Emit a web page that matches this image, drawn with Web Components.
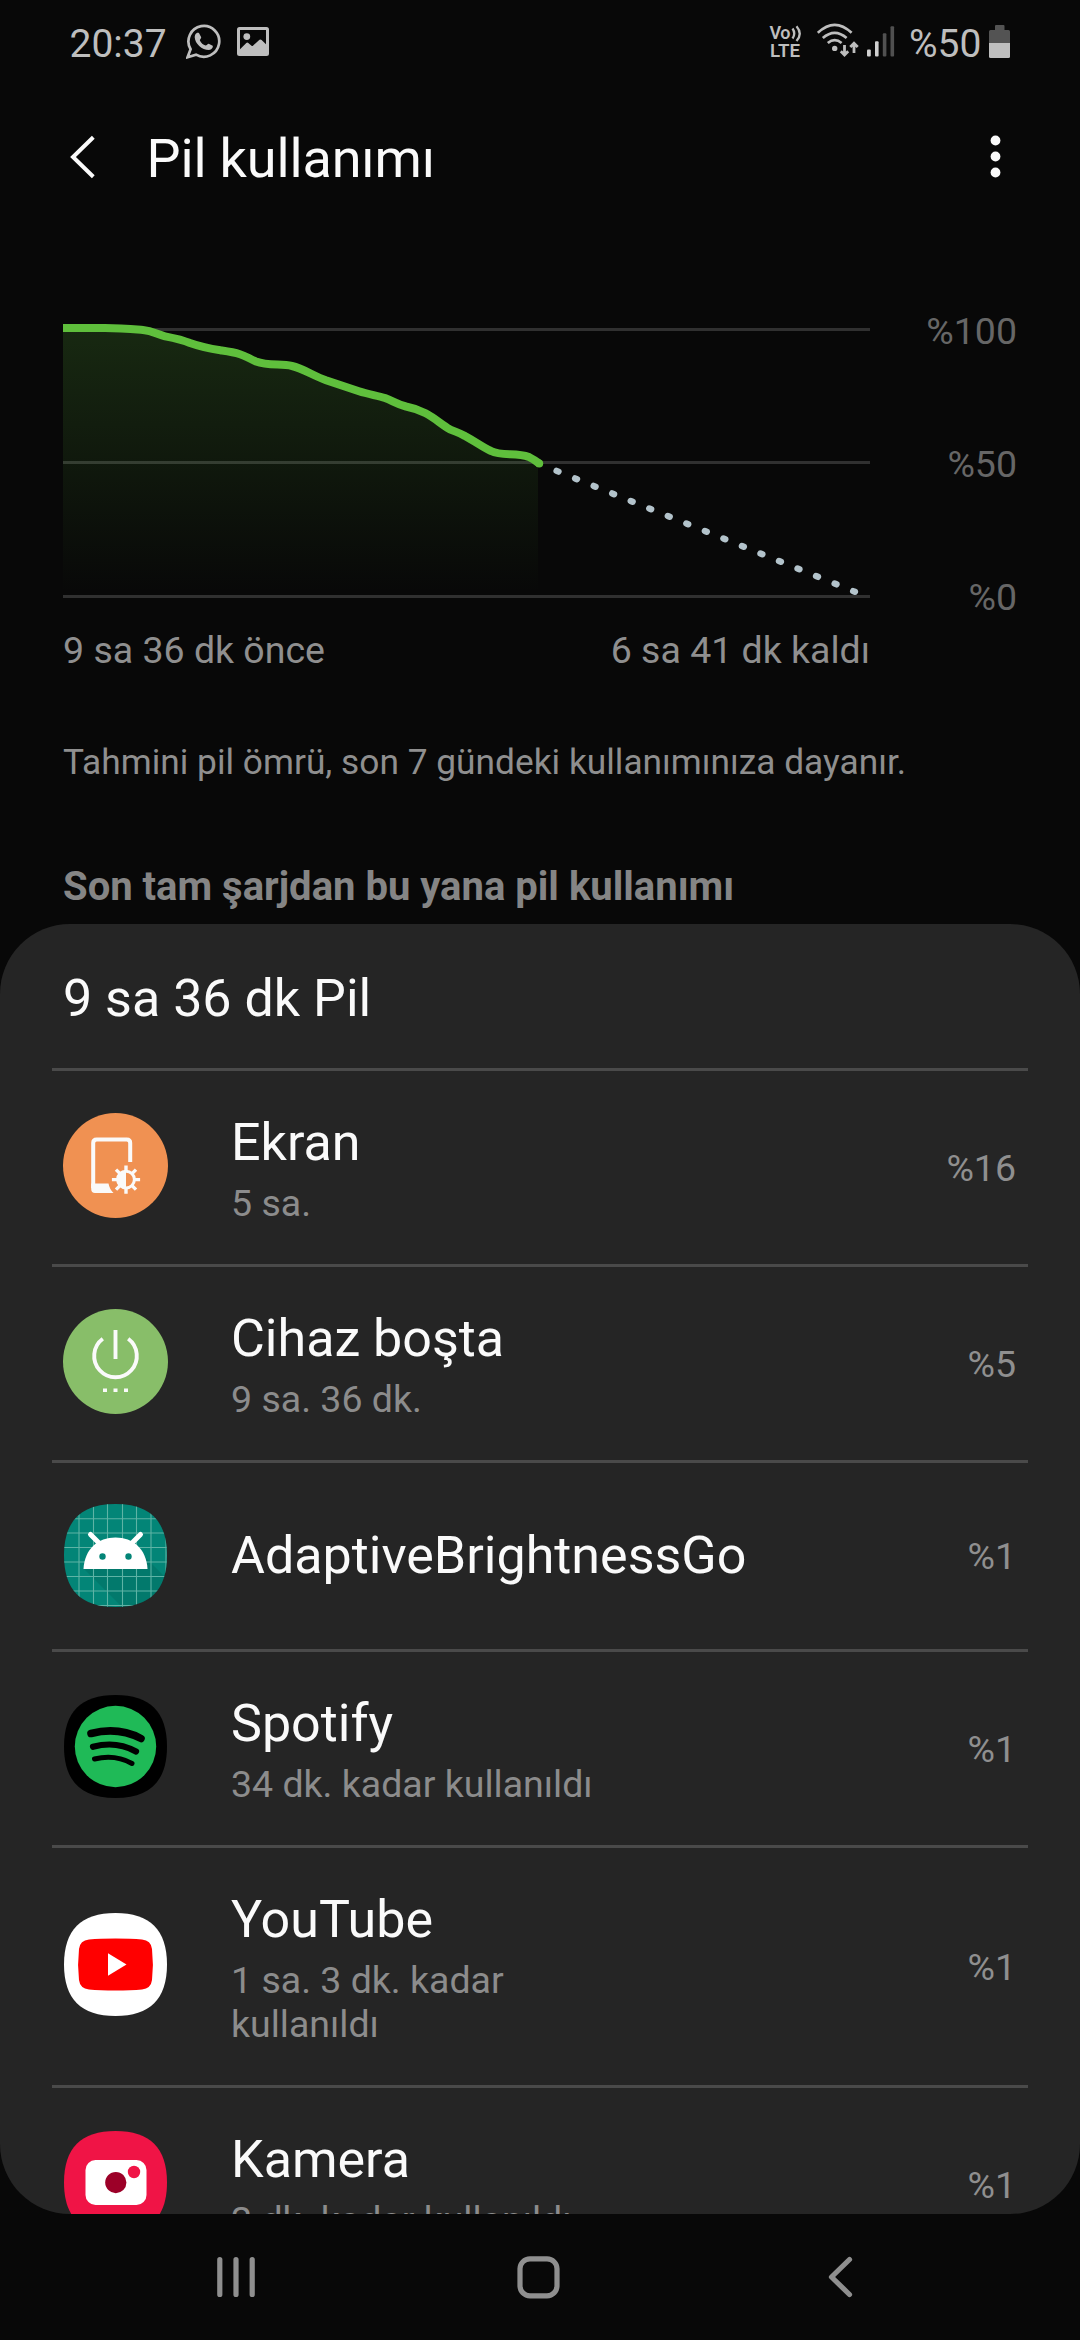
<!DOCTYPE html>
<html lang="tr">
<head>
<meta charset="utf-8">
<title>Pil kullanımı</title>
<style>
html,body{margin:0;padding:0;background:#080808}
body{font-family:Roboto,"Noto Sans",sans-serif;width:1080px;height:2340px;overflow:hidden}
</style>
</head>
<body>
<battery-screen></battery-screen>
<script>
const define = (name, html) => {
  const t = document.createElement('template');
  t.innerHTML = html;
  customElements.define(name, class extends HTMLElement {
    constructor() {
      super();
      this.attachShadow({ mode: 'open' }).append(t.content.cloneNode(true));
    }
  });
};

define('status-bar', `
<style>
:host{display:flex;height:84px;align-items:flex-start;box-sizing:border-box;padding:0 70px 0 69.5px;color:#bebebe;font-size:39px;line-height:46px;white-space:nowrap}
.t{margin-top:21px;width:116.5px}
svg{display:block;flex:none}
.sp{flex:1}
.wa{margin:24px 16px 0 0}.im{margin-top:27px}
.vl{margin-top:18px}
.wifi{margin:23px 0 0 14px}
.sig{margin:26px 0 0 8px}
.pct{width:76px;margin-top:21px;margin-left:14px}
.bat{margin:25px 0 0 4px}
</style>
<span class="t">20:37</span>
<svg class="wa" width="35" height="35" viewBox="0 0 35 35"><path d="M4.6 25.2A15.4 15.4 0 1 1 10 30.6L1.6 33.2Z" fill="none" stroke="#bebebe" stroke-width="2.7"/><path d="M9.3 10.6C10.2 8.9 12 8.4 13.1 9.2L15.2 13.2C15.4 14.4 13.6 15.4 13.9 16.4C15.2 19 17 20.6 19.6 21.6C20.7 21.6 21.5 19.8 22.7 19.8L26.7 21.8C27.4 23.4 25.6 25.7 23 26C15.8 26 9 19.5 8.7 13.2C8.7 12.2 8.9 11.3 9.3 10.6Z" fill="#bebebe"/></svg>
<svg class="im" width="32" height="30" viewBox="0 0 32 30"><path fill-rule="evenodd" fill="#bebebe" d="M2.5 0H29.5Q32 0 32 2.5V26.5Q32 29 29.5 29H2.5Q0 29 0 26.5V2.5Q0 0 2.5 0ZM3 3V22.3L9.3 16Q10.3 15.2 11.3 16L14.5 18.8Q15.3 19.2 16.2 18.4L22.5 12.7Q23.6 12 24.6 12.9L29 17.3V3Z"/><circle cx="9.8" cy="9.6" r="3.4" fill="#bebebe"/></svg>
<span class="sp"></span>
<svg class="vl" width="34" height="44" viewBox="0 -6 34 44"><g fill="#bebebe" font-family="Roboto" font-weight="600" font-size="18"><text x="0.5" y="15.2" textLength="21">Vo</text><text x="1" y="33" textLength="30" lengthAdjust="spacingAndGlyphs">LTE</text></g><path d="M23.5 4.5Q27 9.5 23.5 14.5M27.5 2.2Q34 9.8 27.5 17" fill="none" stroke="#bebebe" stroke-width="2.3"/></svg>
<svg class="wifi" width="42" height="36" viewBox="0 0 42 36"><g fill="none" stroke="#bebebe" stroke-width="2.7"><path d="M.8 9.8Q17.7 -6.2 34.6 9.8"/><path d="M5.8 15Q17.7 4.7 29.6 15"/><path d="M10.8 20Q17.7 14.3 24.6 20"/></g><circle cx="17.7" cy="25.4" r="2.7" fill="#bebebe"/><path d="M27.5 22V31.5M23.8 28.2L27.5 31.9L31.2 28.2M37 30V20.5M33.3 24L37 20.3L40.7 24" stroke="#bebebe" stroke-width="2.8" fill="none"/></svg>
<svg class="sig" width="28" height="32" viewBox="0 0 28 32"><g fill="#d0d0d0"><rect y="23.5" width="3.8" height="7" rx="1"/><rect x="8" y="15.3" width="3.6" height="15.2" rx="1"/></g><g fill="#505050"><rect x="15.8" y="7.3" width="3.6" height="23.2" rx="1"/><rect x="23.5" y=".3" width="3.6" height="30.2" rx="1"/></g></svg>
<span class="pct">%50</span>
<svg class="bat" width="21" height="33" viewBox="0 0 21 33"><path d="M6 1Q6 0 7 0H14.5Q15.5 0 15.5 1V5H19.5Q21 5 21 6.5V18H0V6.5Q0 5 1.5 5H6Z" fill="#535353"/><path d="M0 18H21V31.5Q21 33 19.5 33H1.5Q0 33 0 31.5Z" fill="#bebebe"/></svg>
`);

define('app-header', `
<style>
:host{display:flex;height:146px;align-items:center;box-sizing:border-box;padding:0 79px 0 70px;color:#fafafa}
svg{display:block}
.t{flex:1;margin-left:50.5px;font-size:54px;letter-spacing:-.15px;line-height:64px;padding-top:4px}
</style>
<svg width="26" height="44" viewBox="0 0 26 44"><path d="M23.3 2.3L3 22L23.3 41.7" fill="none" stroke="#fafafa" stroke-width="4"/></svg>
<span class="t"><slot></slot></span>
<svg width="11" height="44" viewBox="0 0 11 44"><g fill="#fafafa"><circle cx="5.5" cy="5.5" r="4.9"/><circle cx="5.5" cy="21.5" r="4.9"/><circle cx="5.5" cy="37.5" r="4.9"/></g></svg>
`);

define('usage-chart', `
<style>
:host{display:block;padding:78px 63px 0;color:#8f8f8f;font-size:37.5px}
.row{display:flex;justify-content:space-between}
svg{display:block}
.y{display:flex;flex-direction:column;text-align:right;color:#666;line-height:44px;gap:89px;padding-top:1px}
.x{display:flex;justify-content:space-between;width:807px;line-height:44px;margin-top:9px}
</style>
<div class="row">
<svg width="807" height="302" viewBox="63 308 807 302">
<defs><linearGradient id="g" gradientUnits="userSpaceOnUse" x1="0" y1="328" x2="0" y2="593"><stop offset="0" stop-color="#5fbf3c" stop-opacity=".18"/><stop offset="1" stop-color="#5fbf3c" stop-opacity="0"/></linearGradient></defs>
<g fill="#303030"><rect x="63" y="328" width="807" height="3"/><rect x="63" y="461" width="807" height="3"/><rect x="63" y="595" width="807" height="3"/></g>
<path fill="url(#g)" d="M63 328H105C120 328 131 329 143 330C153 331 157 334.5 165 336.3C174 338 182 339.5 190 343C204 348 209 348.6 222 350.5C246 354 245 357 256 361.5C268 366 281 363.5 292 366C303 368.5 314 376 326 380.3L359 391.3C369 394.5 378 395.6 385 398C393 401 396 404 406 406.5C429 411 437 422 449.8 429.3C456 432 460 433 465 436C476 442 484 448 491 451C502 456.5 516 452 529 457C532 458.5 536 461 538 463.5V595H63Z"/>
<path d="M556.6 470.9L854.9 591.8" fill="none" stroke="#b3c3cb" stroke-width="6.4" stroke-linecap="round" stroke-dasharray="2 18"/>
<path d="M63 328H105C120 328 131 329 143 330C153 331 157 334.5 165 336.3C174 338 182 339.5 190 343C204 348 209 348.6 222 350.5C246 354 245 357 256 361.5C268 366 281 363.5 292 366C303 368.5 314 376 326 380.3L359 391.3C369 394.5 378 395.6 385 398C393 401 396 404 406 406.5C429 411 437 422 449.8 429.3C456 432 460 433 465 436C476 442 484 448 491 451C502 456.5 516 452 529 457C532 458.5 536 461 539.2 463.5" fill="none" stroke="#5fbf3c" stroke-width="8"/><circle cx="539.2" cy="463.5" r="4" fill="#5fbf3c"/>
</svg>
<div class="y"><span>%100</span><span>%50</span><span>%0</span></div>
</div>
<div class="x"><span>9 sa 36 dk önce</span><span>6 sa 41 dk kaldı</span></div>
`);

define('app-row', `
<style>
:host{display:flex;align-items:center;margin:0 52px;padding:41px 12px 39px 11px;border-top:3px solid #4a4a4a}
:host([single]){padding-top:40px;padding-bottom:41px}
.i{width:105px;height:105px;margin-bottom:6px;flex:none}
:host([single]) .i{margin:0}
.b{flex:1;margin-left:63px}
.n{font-size:52px;line-height:60px;color:#fafafa;padding-top:1px}
.s{font-size:37.5px;line-height:44px;color:#8c8c8c;margin-top:8px;max-width:400px}
:host([single]) .s{display:none}
.p{font-size:37.5px;line-height:44px;color:#8f8f8f;margin-bottom:2px}
:host([single]) .p{margin:0}
</style>
<div class="i"><slot name="icon"></slot></div>
<div class="b"><div class="n"><slot name="name"></slot></div><div class="s"><slot name="time"></slot></div></div>
<div class="p"><slot></slot></div>
`);

const SQ = 'M52.5 1C87 1 104 18 104 52.5C104 87 87 104 52.5 104C18 104 1 87 1 52.5C1 18 18 1 52.5 1Z';
const ART = {
  screen: `<circle cx="52.5" cy="52.5" r="52.5" fill="#f09152"/><path d="M67.2 49V30Q67.2 26.5 63.7 26.5H33.7Q30.2 26.5 30.2 30V75" fill="none" stroke="#fafafa" stroke-width="4"/><path d="M28.2 70.5H45.5Q46.5 76 50.5 80H32Q28.2 80 28.2 76Z" fill="#fafafa"/><g stroke="#fafafa" stroke-width="3.4"><path d="M63 52.5V80.7M48.9 66.6H77.1M53 56.6L73 76.6M73 56.6L53 76.6"/></g><circle cx="63" cy="66.6" r="8.4" fill="#f09152" stroke="#fafafa" stroke-width="3"/><path d="M63 57.5A9.1 9.1 0 0 0 63 75.7Z" fill="#fafafa"/>`,
  power: `<circle cx="52.5" cy="52.5" r="52.5" fill="#88be69"/><path d="M39.8 29.8A21.3 21.3 0 1 0 65.2 29.8M52.5 21V50" fill="none" stroke="#fafafa" stroke-width="3.9"/><path d="M40 79.5h4v3.5h-4zM50.5 79.5h4v3.5h-4zM61 79.5h4v3.5h-4z" fill="#fafafa"/>`,
  android: `<clipPath id="c"><path d="${SQ}"/></clipPath><g clip-path="url(#c)"><path d="M0 0H105V105H0Z" fill="#038577"/><path d="M21 66L60 105H105V77L77 49Z" fill="#000" opacity=".09"/><path d="M16 0V105M30.5 0V105M44.5 0V105M59.5 0V105M73.5 0V105M88 0V105M103 0V105M0 15.8H105M0 30H105M0 44.5H105M0 59H105M0 73.5H105M0 88H105M0 102.5H105" stroke="#5eb3a5" stroke-width="1.1"/></g><path d="M20.5 66C21.5 46 35 34.5 52.5 34.5S83.5 46 84.5 66Z" fill="#fff"/><path d="M27.5 31.5L37 41M77.5 31.5L68 41" stroke="#fff" stroke-width="5" stroke-linecap="round"/><circle cx="39.5" cy="53.5" r="3.2" fill="#038577"/><circle cx="65.5" cy="53.5" r="3.2" fill="#038577"/>`,
  music: `<path d="${SQ}" fill="#000"/><circle cx="52.5" cy="52.5" r="40.7" fill="#1fba57"/><g fill="none" stroke="#000" stroke-linecap="round"><path d="M28 39.5Q55 32.5 78 44.5" stroke-width="7.6"/><path d="M30 52.8Q53 46.5 73 57.5" stroke-width="6.2"/><path d="M31.5 65Q52 60 69 69.5" stroke-width="5"/></g>`,
  video: `<path d="${SQ}" fill="#fff"/><path d="M52.5 26.5Q68 26.5 79 27.6Q88 28.5 89 37Q90.8 52.5 89 68Q88 76.5 79 77.4Q68 78.5 52.5 78.5T26 77.4Q17 76.5 16 68Q14.2 52.5 16 37Q17 28.5 26 27.6Q37 26.5 52.5 26.5Z" fill="#f00"/><path d="M45 41.2L63.5 52.5L45 63.8Z" fill="#fff"/>`,
  camera: `<path d="${SQ}" fill="#f01446"/><rect x="22.5" y="30" width="61" height="45" rx="10" fill="#fff"/><circle cx="52.8" cy="52.6" r="10.6" fill="#9c0028"/><circle cx="71" cy="42" r="6.2" fill="#f01446"/>`
};
customElements.define('app-icon', class extends HTMLElement {
  connectedCallback() {
    if (this.shadowRoot) return;
    this.attachShadow({ mode: 'open' }).innerHTML =
      `<style>:host,svg{display:block}</style><svg width="105" height="105" viewBox="0 0 105 105">${ART[this.getAttribute('kind')]}</svg>`;
  }
});

define('usage-card', `
<style>
:host{display:block;box-sizing:border-box;height:1290px;border-radius:70px;background:#252525;overflow:hidden}
.h{font-size:52px;line-height:60px;color:#fafafa;padding:45px 63px 39px}
</style>
<div class="h"><slot name="title"></slot></div><slot></slot>
`);

define('nav-bar', `
<style>
:host{display:flex;justify-content:space-between;padding:41px 227px 0 216px}
svg{display:block}
.home{margin-right:7.4px}
</style>
<svg width="40" height="44" viewBox="0 0 40 44"><path d="M3.8 4.5V39.5M20 4.5V39.5M36.2 4.5V39.5" stroke="#8f8f8f" stroke-width="5.2" stroke-linecap="round"/></svg>
<svg class="home" width="44" height="44" viewBox="0 0 44 44"><rect x="4" y="3.8" width="37" height="37" rx="10" fill="none" stroke="#8f8f8f" stroke-width="5.2"/></svg>
<svg width="26" height="44" viewBox="0 0 26 44"><path d="M22.5 4.5L4.5 22L22.5 39.5" fill="none" stroke="#8f8f8f" stroke-width="5.2" stroke-linecap="round" stroke-linejoin="round"/></svg>
`);

define('battery-screen', `
<style>
:host{display:block;height:2340px;background:#080808;overflow:hidden}
.note{font-size:35.3px;line-height:42px;color:#8f8f8f;padding:69px 63px 0;white-space:nowrap}
.sec{font-size:40px;line-height:44px;font-weight:700;color:#858585;padding:82px 63px 15px;white-space:nowrap}
</style>
<status-bar></status-bar>
<app-header>Pil kullanımı</app-header>
<usage-chart></usage-chart>
<div class="note">Tahmini pil ömrü, son 7 gündeki kullanımınıza dayanır.</div>
<div class="sec">Son tam şarjdan bu yana pil kullanımı</div>
<usage-card>
<span slot="title">9 sa 36 dk Pil</span>
<app-row><app-icon slot="icon" kind="screen"></app-icon><span slot="name">Ekran</span><span slot="time">5 sa.</span>%16</app-row>
<app-row><app-icon slot="icon" kind="power"></app-icon><span slot="name">Cihaz boşta</span><span slot="time">9 sa. 36 dk.</span>%5</app-row>
<app-row single><app-icon slot="icon" kind="android"></app-icon><span slot="name">AdaptiveBrightnessGo</span>%1</app-row>
<app-row><app-icon slot="icon" kind="music"></app-icon><span slot="name">Spotify</span><span slot="time">34 dk. kadar kullanıldı</span>%1</app-row>
<app-row><app-icon slot="icon" kind="video"></app-icon><span slot="name">YouTube</span><span slot="time">1 sa. 3 dk. kadar kullanıldı</span>%1</app-row>
<app-row><app-icon slot="icon" kind="camera"></app-icon><span slot="name">Kamera</span><span slot="time">2 dk. kadar kullanıldı</span>%1</app-row>
</usage-card>
<nav-bar></nav-bar>
`);
</script>
</body>
</html>
